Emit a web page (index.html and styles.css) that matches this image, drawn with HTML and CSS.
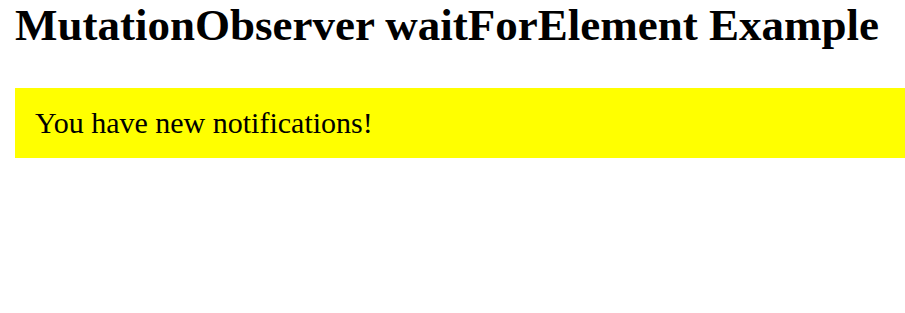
FILE: index.html
```html
<!DOCTYPE html>
<html lang="en">
<head>
  <meta charset="UTF-8">
  <title>MutationObserver waitForElement Example</title>
  <link rel="stylesheet" href="styles.css">
</head>
<body>
  <h1>MutationObserver waitForElement Example</h1>
  <div id="notification" class="notification">You have new notifications!</div>
</body>
</html>
```

FILE: styles.css
```css
body {
  margin: 0 0 0 15px;
  font-family: "Liberation Serif", "Times New Roman", serif;
  color: #000;
  background: #fff;
}
h1 {
  font-size: 45px;
  font-weight: bold;
  margin: 0;
  line-height: 50px;
  white-space: nowrap;
}
.notification {
  background: #ffff00;
  font-size: 30px;
  margin-top: 38px;
  padding: 18px 20px;
}
```
